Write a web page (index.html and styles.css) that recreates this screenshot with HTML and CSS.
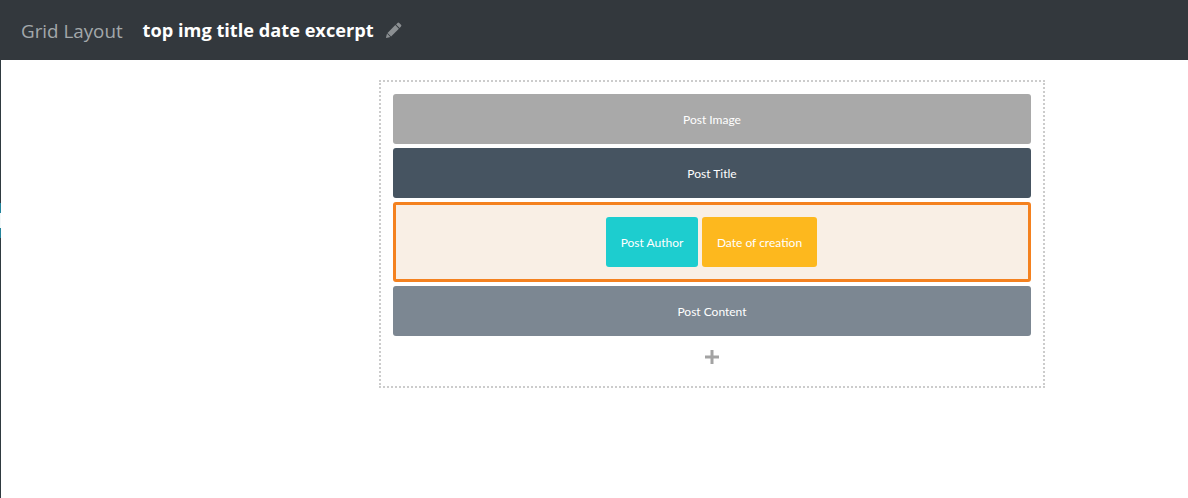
FILE: index.html
```html
<!DOCTYPE html>
<html lang="en">
<head>
    <meta charset="UTF-8">
    <title>Grid Layout</title>
    <link rel="stylesheet" href="styles.css">
</head>
<body>
    <header class="topbar">
        <span class="topbar-label">Grid Layout</span>
        <span class="topbar-title">top img title date excerpt</span>
        <svg class="edit-icon" viewBox="0 0 16 16" width="16" height="16">
            <path d="M11.5 1a1.2 1.2 0 0 1 1.7 0l1.8 1.8a1.2 1.2 0 0 1 0 1.7l-1.4 1.4-3.5-3.5zM9.3 3.1l3.6 3.6-7.8 7.8-3.6-3.6zM1 11.6l3.4 3.4-4 1a.4.4 0 0 1-.4-.4z"/>
        </svg>
    </header>
    <main class="page">
        <i class="edge-mark"></i>
        <div class="layout-box">
            <div class="block block-image">Post Image</div>
            <div class="block block-title">Post Title</div>
            <div class="block-group">
                <div class="chip chip-author">Post Author</div>
                <div class="chip chip-date">Date of creation</div>
            </div>
            <div class="block block-content">Post Content</div>
            <div class="add-row">
                <svg class="add-icon" viewBox="0 0 14 14" width="14" height="14">
                    <path d="M5.5 0h3v5.5H14v3H8.5V14h-3V8.5H0v-3h5.5z"/>
                </svg>
            </div>
        </div>
    </main>
</body>
</html>
```

FILE: styles.css
```css
body {
    margin: 0;
    padding: 0;
    background-color: #fff;
    font-family: 'Open Sans', sans-serif;
}
.topbar {
    height: 60px;
    background-color: #33383d;
    display: flex;
    align-items: center;
    padding-left: 21px;
}
.topbar-label {
    color: #a3a8ab;
    font-size: 18.8px;
    margin: 1px 20px 0 0;
}
.topbar-title {
    color: #fff;
    font-size: 18.2px;
    font-weight: 700;
    margin-right: 12px;
}
.edit-icon {
    fill: #8b8f92;
}
.page {
    position: relative;
    height: 438px;
    box-sizing: border-box;
    border-left: 1px solid #2f3a40;
    padding: 20px 0 0 378px;
}
.edge-mark {
    position: absolute;
    left: -1px;
    top: 143px;
    width: 1px;
    height: 15px;
    background-color: #f4f8f9;
    border-top: 10px solid #23849c;
    border-bottom: 10px solid #23849c;
}
.layout-box {
    width: 666px;
    height: 308px;
    box-sizing: border-box;
    border: 2px dotted #ccc;
    padding: 12px;
    display: flex;
    flex-direction: column;
    gap: 4px;
}
.block {
    height: 50px;
    border-radius: 3px;
    color: #fff;
    font-family: 'Lato', sans-serif;
    font-size: 12px;
    display: flex;
    align-items: center;
    justify-content: center;
}
.block-image {
    background-color: #a9a9a9;
}
.block-title {
    background-color: #465461;
}
.block-content {
    background-color: #7c8792;
}
.block-group {
    height: 80px;
    box-sizing: border-box;
    border: 3px solid #f4811f;
    border-radius: 3px;
    background-color: #f9efe5;
    padding-left: 210px;
    display: flex;
    align-items: center;
    gap: 4px;
}
.chip {
    height: 50px;
    border-radius: 3px;
    color: #fff;
    font-family: 'Lato', sans-serif;
    font-size: 12px;
    display: flex;
    align-items: center;
    justify-content: center;
}
.chip-author {
    width: 92px;
    background-color: #1dcdcf;
}
.chip-date {
    width: 115px;
    background-color: #fdb81e;
}
.add-row {
    display: flex;
    justify-content: center;
    padding-top: 10px;
}
.add-icon {
    fill: #a3a3a3;
}
```
